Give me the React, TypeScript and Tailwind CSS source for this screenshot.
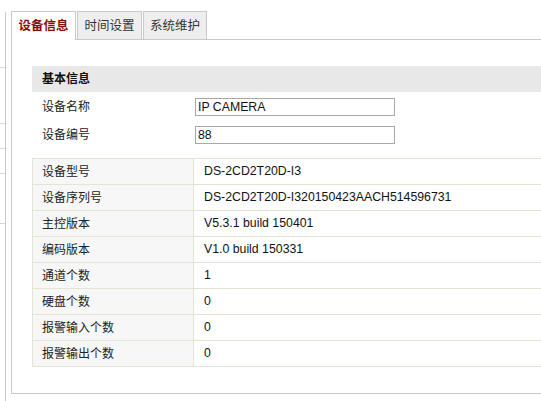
import React from "react";

const rows: [string, string][] = [
  ["设备型号", "DS-2CD2T20D-I3"],
  ["设备序列号", "DS-2CD2T20D-I320150423AACH514596731"],
  ["主控版本", "V5.3.1 build 150401"],
  ["编码版本", "V1.0 build 150331"],
  ["通道个数", "1"],
  ["硬盘个数", "0"],
  ["报警输入个数", "0"],
  ["报警输出个数", "0"],
];

export default function App() {
  return (
    <div
      className="relative flex w-[541px] h-[401px] overflow-hidden bg-white text-[12px] text-[#222]"
      style={{ fontFamily: '"Liberation Sans", Arial, "Noto Sans CJK SC", sans-serif' }}
    >
      {/* left side strip */}
      <div className="mt-[12px] w-[6px] h-[389px] shrink-0 border-r border-[#c8c8c8] flex flex-col">
        <div className="h-[56px] border-b border-[#d8d8d8]" />
        <div className="h-[56px] border-b border-[#d8d8d8]" />
        <div className="h-[25px] border-b border-[#d8d8d8]" />
        <div className="h-[25px] border-b border-[#d8d8d8]" />
        <div className="h-[50px] border-b border-[#d8d8d8]" />
      </div>

      {/* main */}
      <div className="ml-[5px] mt-[11px] w-[620px] shrink-0 flex flex-col">
        <div className="flex items-end gap-[1px] relative z-10">
          <div className="w-[65px] h-[29px] -mb-[1px] bg-white border border-b-0 border-[#c8c8c8] flex items-center justify-center font-bold text-[#8b0a0a] text-[12.5px] pt-[1px]">
            设备信息
          </div>
          <div className="w-[65px] h-[28px] bg-[#eeeeee] border border-b-0 border-[#c8c8c8] flex items-center justify-center text-[#333] text-[12.5px] pt-[2px]">
            时间设置
          </div>
          <div className="w-[64px] h-[28px] bg-[#eeeeee] border border-b-0 border-[#c8c8c8] flex items-center justify-center text-[#333] text-[12.5px] pt-[2px]">
            系统维护
          </div>
        </div>
        <div className="h-[355px] border-t border-l border-b border-[#c8c8c8] pt-[26px] pl-[20px]">
          <div className="h-[26px] bg-[#e8e8e8] flex items-center pl-[10px] font-bold text-[#111]">
            基本信息
          </div>
          <div className="pt-[1px]">
            <div className="h-[28px] flex items-center">
              <div className="w-[163px] pl-[10px]">设备名称</div>
              <div className="w-[200px] h-[18px] border border-[#a8a8a8] flex items-center pl-[2px] text-[#111] text-[12.3px]">
                IP CAMERA
              </div>
            </div>
            <div className="h-[28px] flex items-center">
              <div className="w-[163px] pl-[10px]">设备编号</div>
              <div className="w-[200px] h-[18px] border border-[#a8a8a8] flex items-center pl-[2px] text-[#111] text-[12.3px]">
                88
              </div>
            </div>
          </div>
          <div className="mt-[9px] border-t border-l border-[#e4e4d4]">
            {rows.map(([k, v]) => (
              <div key={k} className="h-[26px] flex border-b border-[#e4e4d4]">
                <div className="w-[161px] bg-[#f7f7f7] border-r border-[#e4e4d4] flex items-center pl-[9px]">
                  {k}
                </div>
                <div className="flex-1 flex items-center pl-[10px] text-[#111] text-[12.3px]">{v}</div>
              </div>
            ))}
          </div>
        </div>
      </div>
    </div>
  );
}
